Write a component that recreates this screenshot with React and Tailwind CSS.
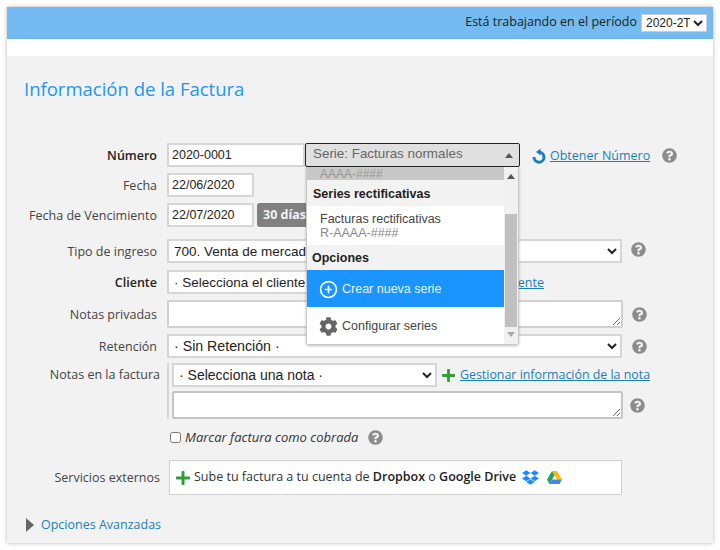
import React from "react";
import { FaQuestionCircle, FaCog, FaPlus, FaDropbox } from "react-icons/fa";
import { FiPlusCircle } from "react-icons/fi";

const Help = ({ className = "" }) => (
    <FaQuestionCircle className={`text-[15px] text-[#8c8c8c] shrink-0 ${className}`} />
);

const Label = ({ children, bold }) => (
    <label className={`w-[150px] shrink-0 pt-[2px] text-right text-[12.5px] ${bold ? "font-semibold text-[#222]" : "text-[#444]"}`}>
        {children}
    </label>
);

const fieldClass = "h-[24px] border-2 border-[#d6d6d6] bg-white text-[12.5px] text-[#222] font-['Liberation_Sans',sans-serif]";
const selectClass = "h-[24px] border-2 border-[#d6d6d6] bg-white text-[13.5px] text-[#222] font-['Liberation_Sans',sans-serif]";
const areaClass = "block border-2 border-[#c4c4c4] rounded-[2px] bg-white";

const DriveIcon = () => (
    <svg width="15" height="13" viewBox="0 0 15 13">
        <path d="M5 0h5l5 8.5h-5z" fill="#fbbc04" />
        <path d="M5 0l2.5 4.3L2.5 13 0 8.5z" fill="#1fa463" />
        <path d="M5 8.5h10L12.5 13h-10z" fill="#4285f4" />
    </svg>
);

const ReloadIcon = () => (
    <svg width="16" height="16" viewBox="0 0 16 16" className="shrink-0">
        <path d="M8.5 4.2A5 5 0 1 1 3 9" fill="none" stroke="#1a7fb8" strokeWidth="3" />
        <path d="M9.5 0.5v7L5 4z" fill="#1a7fb8" />
    </svg>
);

// lista desplegable de series, abierta sobre el formulario
const SeriesDropdown = () => (
    <div className="absolute left-[1px] top-[23px] z-10 flex h-[179px] w-[213px] overflow-hidden rounded-b-[3px] border border-[#c8c8c8] bg-white text-[12.5px] shadow-[0_1px_3px_rgba(0,0,0,0.25)]">
        <div className="w-[197px] shrink-0 font-['Liberation_Sans',sans-serif]">
            <div className="flex h-[13px] items-end overflow-hidden bg-[#c8c8c8] pl-[13px] text-[12px] leading-[12px] text-[#999]">
                AAAA-####
            </div>
            <div className="flex h-[26px] items-center bg-[#f2f2f2] pl-[6px] pt-[2px] font-bold text-[#222]">
                Series rectificativas
            </div>
            <div className="h-[39px] bg-white pl-[13px] pt-[6px] leading-[14px] text-[#444]">
                <div>Facturas rectificativas</div>
                <div className="text-[#888]">R-AAAA-####</div>
            </div>
            <div className="flex h-[25px] items-center bg-[#f2f2f2] pl-[5px] pt-[2px] font-bold text-[#222]">
                Opciones
            </div>
            <div className="flex h-[37px] items-center gap-[4px] bg-[#1a94ff] pl-[12px] pt-[2px] text-[#e8f4ff]">
                <FiPlusCircle className="text-[19px] text-white" />
                Crear nueva serie
            </div>
            <div className="flex h-[39px] items-center gap-[4px] bg-white pl-[12px] text-[#444]">
                <FaCog className="text-[19px] text-[#666]" />
                Configurar series
            </div>
        </div>
        <div className="flex flex-1 flex-col items-center bg-[#f1f1f1] px-[1px]">
            <div className="mt-[7px] h-0 w-0 border-x-[4px] border-b-[5px] border-x-transparent border-b-[#555]" />
            <div className="mt-[35px] h-[113px] w-full bg-[#c0c0c0]" />
            <div className="mt-[5px] h-0 w-0 border-x-[4px] border-t-[5px] border-x-transparent border-t-[#aaa]" />
        </div>
    </div>
);

const App = () => {
    return (
        <div className="h-[550px] w-[720px] overflow-hidden bg-white pl-[7px] pt-[7px] font-['Open_Sans',sans-serif]">
            <div className="h-[536px] w-[706px] bg-[#f2f2f2] shadow-[0_0_4px_rgba(0,0,0,0.3)]">
                {/* barra superior */}
                <div className="flex h-[32px] items-center justify-end gap-[4px] border-b border-[#6fb0e8] bg-[#73bbf0] pr-[6px] text-[12.5px] text-[#222]">
                    <span>Está trabajando en el período</span>
                    <select defaultValue="2020-2T" className="h-[18px] w-[66px] border border-[#ccc] bg-white text-[12px] font-['Liberation_Sans',sans-serif]">
                        <option>2020-2T</option>
                    </select>
                </div>
                <div className="h-[17px] bg-white" />

                <h1 className="ml-[17px] mt-[20px] text-[18.5px] leading-[26px] text-[#2196f3]">
                    Información de la Factura
                </h1>

                <div className="mt-[41px] flex flex-col">
                    {/* Número */}
                    <div className="flex items-center gap-[10px]">
                        <Label bold>Número</Label>
                        <div className="flex items-center">
                            <input readOnly value="2020-0001" className={`${fieldClass} w-[138px] pl-[3px]`} />
                            <div className="relative">
                                <div className="relative z-20 flex h-[24px] w-[215px] items-center justify-between rounded-[2px] border border-[#222] bg-[#e0e0e0] pb-[2px] pl-[7px] pr-[6px] text-[13.4px] text-[#666] font-['Liberation_Sans',sans-serif]">
                                    Serie: Facturas normales
                                    <span className="mt-[3px] h-0 w-0 border-x-[4px] border-b-[5px] border-x-transparent border-b-[#555]" />
                                </div>
                                <SeriesDropdown />
                            </div>
                        </div>
                        <a className="ml-[1px] flex items-center gap-[3px] pt-[2px] text-[12.5px] text-[#1a7fb8] underline">
                            <ReloadIcon />
                            Obtener Número
                        </a>
                        <Help className="ml-[2px]" />
                    </div>

                    {/* Fecha */}
                    <div className="mt-[6px] flex items-center gap-[10px]">
                        <Label>Fecha</Label>
                        <input readOnly value="22/06/2020" className={`${fieldClass} w-[87px] pl-[3px]`} />
                    </div>

                    {/* Vencimiento */}
                    <div className="mt-[6px] flex items-center gap-[10px]">
                        <Label>Fecha de Vencimiento</Label>
                        <input readOnly value="22/07/2020" className={`${fieldClass} w-[87px] pl-[3px]`} />
                        <span className="-ml-[7px] flex h-[24px] w-[50px] items-center whitespace-nowrap rounded-l-[3px] bg-[#808080] pl-[6px] text-[12.5px] font-bold text-[#f2f2f2]">
                            30 días
                        </span>
                    </div>

                    {/* Tipo de ingreso */}
                    <div className="mt-[12px] flex items-center gap-[10px]">
                        <Label>Tipo de ingreso</Label>
                        <select defaultValue="700" className={`${selectClass} w-[455px] pl-[1px]`}>
                            <option value="700">700. Venta de mercaderías</option>
                        </select>
                        <Help className="-ml-[1px] -mt-[4px]" />
                    </div>

                    {/* Cliente */}
                    <div className="mt-[7px] flex items-center gap-[10px]">
                        <Label bold>Cliente</Label>
                        <select defaultValue="" className={`${selectClass} w-[230px] pl-[1px]`}>
                            <option value="">· Selecciona el cliente ·</option>
                        </select>
                        <a className="ml-[5px] w-[132px] pt-[2px] text-right text-[12.5px] text-[#1a7fb8] underline">Crear nuevo cliente</a>
                    </div>

                    {/* Notas privadas */}
                    <div className="mt-[6px] flex items-center gap-[10px]">
                        <Label>Notas privadas</Label>
                        <textarea readOnly className={`${areaClass} h-[28px] w-[456px] border-[#d0d0d0]`} />
                        <Help className="-ml-[1px]" />
                    </div>

                    {/* Retención */}
                    <div className="mt-[6px] flex items-center gap-[10px]">
                        <Label>Retención</Label>
                        <select defaultValue="" className={`${selectClass} w-[455px] pl-[1px] text-[14.2px]`}>
                            <option value="">· Sin Retención ·</option>
                        </select>
                        <Help className="ml-0" />
                    </div>

                    {/* Notas en la factura */}
                    <div className="mt-[5px] flex items-start">
                        <label className="w-[153px] shrink-0 pt-[3px] text-right text-[12.5px] text-[#444]">Notas en la factura</label>
                        <div className="ml-[7px] border-l-2 border-[#d6d6d6] pl-[3px]">
                            <div className="flex items-center gap-[4px]">
                                <select defaultValue="" className={`${selectClass} w-[265px] pl-[1px] text-[14px]`}>
                                    <option value="">· Selecciona una nota ·</option>
                                </select>
                                <FaPlus className="text-[15px] text-[#2e9e3e]" />
                                <a className="text-[12.4px] text-[#1a7fb8] underline">Gestionar información de la nota</a>
                            </div>
                            <div className="mt-[4px] flex items-center">
                                <textarea readOnly className={`${areaClass} h-[28px] w-[451px] border-[#aaa]`} />
                                <Help className="ml-[7px]" />
                            </div>
                        </div>
                    </div>

                    {/* Cobrada */}
                    <div className="ml-[163px] mt-[9px] flex items-center">
                        <input type="checkbox" className="h-[11px] w-[11px]" />
                        <span className="ml-[4px] text-[13px] italic text-[#333]">Marcar factura como cobrada</span>
                        <Help className="ml-[10px]" />
                    </div>

                    {/* Servicios externos */}
                    <div className="mt-[12px] flex items-center">
                        <label className="w-[153px] shrink-0 pt-[2px] text-right text-[12.5px] text-[#444]">Servicios externos</label>
                        <div className="ml-[9px] flex h-[35px] w-[453px] items-center border border-[#d0d0d0] bg-white pl-[5px] pt-[1px] text-[12.5px] text-[#333]">
                            <FaPlus className="text-[16px] text-[#2e9e3e]" />
                            <span className="ml-[3px]">
                                Sube tu factura a tu cuenta de <span className="font-semibold text-[#222]">Dropbox</span> o <span className="font-semibold text-[#222]">Google Drive</span>
                            </span>
                            <FaDropbox className="ml-[6px] text-[17px] text-[#1a8cff]" />
                            <span className="ml-[8px]"><DriveIcon /></span>
                        </div>
                    </div>

                    {/* Opciones avanzadas */}
                    <div className="ml-[19px] mt-[21px] flex items-center gap-[7px]">
                        <span className="h-0 w-0 border-y-[7px] border-l-[8px] border-y-transparent border-l-[#666]" />
                        <a className="text-[12.5px] text-[#1a7fb8]">Opciones Avanzadas</a>
                    </div>
                </div>
            </div>
        </div>
    );
};

export default App;
